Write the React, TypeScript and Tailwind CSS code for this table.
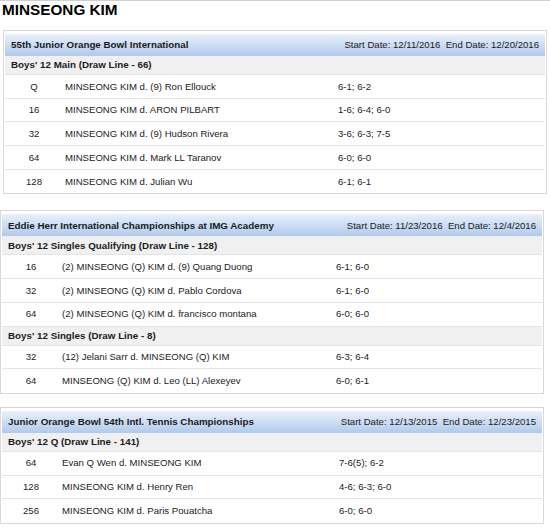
type Match = { round: string; result: string; score: string };
type Draw = { name: string; matches: Match[] };
type Tournament = {
  name: string;
  start: string;
  end: string;
  draws: Draw[];
  shell: string;
  cols: string;
};

const tournaments: Tournament[] = [
  {
    name: "55th Junior Orange Bowl International",
    start: "12/11/2016",
    end: "12/20/2016",
    shell: "ml-[3px] mt-[12px]",
    cols: "grid-cols-[58px_275px_1fr]",
    draws: [
      {
        name: "Boys' 12 Main (Draw Line - 66)",
        matches: [
          { round: "Q", result: "MINSEONG KIM d. (9) Ron Ellouck", score: "6-1; 6-2" },
          { round: "16", result: "MINSEONG KIM d. ARON PILBART", score: "1-6; 6-4; 6-0" },
          { round: "32", result: "MINSEONG KIM d. (9) Hudson Rivera", score: "3-6; 6-3; 7-5" },
          { round: "64", result: "MINSEONG KIM d. Mark LL Taranov", score: "6-0; 6-0" },
          { round: "128", result: "MINSEONG KIM d. Julian Wu", score: "6-1; 6-1" },
        ],
      },
    ],
  },
  {
    name: "Eddie Herr International Championships at IMG Academy",
    start: "11/23/2016",
    end: "12/4/2016",
    shell: "ml-0 mt-[16px]",
    cols: "grid-cols-[58px_276px_1fr]",
    draws: [
      {
        name: "Boys' 12 Singles Qualifying (Draw Line - 128)",
        matches: [
          { round: "16", result: "(2) MINSEONG (Q) KIM d. (9) Quang Duong", score: "6-1; 6-0" },
          { round: "32", result: "(2) MINSEONG (Q) KIM d. Pablo Cordova", score: "6-1; 6-0" },
          { round: "64", result: "(2) MINSEONG (Q) KIM d. francisco montana", score: "6-0; 6-0" },
        ],
      },
      {
        name: "Boys' 12 Singles (Draw Line - 8)",
        matches: [
          { round: "32", result: "(12) Jelani Sarr d. MINSEONG (Q) KIM", score: "6-3; 6-4" },
          { round: "64", result: "MINSEONG (Q) KIM d. Leo (LL) Alexeyev", score: "6-0; 6-1" },
        ],
      },
    ],
  },
  {
    name: "Junior Orange Bowl 54th Intl. Tennis Championships",
    start: "12/13/2015",
    end: "12/23/2015",
    shell: "ml-0 mt-[13px]",
    cols: "grid-cols-[58px_279px_1fr]",
    draws: [
      {
        name: "Boys' 12 Q (Draw Line - 141)",
        matches: [
          { round: "64", result: "Evan Q Wen d. MINSEONG KIM", score: "7-6(5); 6-2" },
          { round: "128", result: "MINSEONG KIM d. Henry Ren", score: "4-6; 6-3; 6-0" },
          { round: "256", result: "MINSEONG KIM d. Paris Pouatcha", score: "6-0; 6-0" },
        ],
      },
    ],
  },
];

function TournamentPanel({ t }: { t: Tournament }) {
  return (
    <section className={`${t.shell} w-[544px] border border-[#d9d9d9] px-px pt-[3px]`}>
      <div className="flex h-[22px] items-center justify-between bg-linear-to-b from-[#e9f1fb] to-[#b0caeb] px-[6px] text-[#1b1b1b]">
        <span className="text-[9.8px] font-bold">{t.name}</span>
        <span>
          Start Date: {t.start}&nbsp;&nbsp;End Date: {t.end}
        </span>
      </div>
      {t.draws.map((draw, di) => (
        <div key={draw.name}>
          <div className="flex h-[19px] items-center border-b border-[#e4e4e4] bg-[#f0f0f0] px-[6px] text-[9.8px] font-bold text-[#1b1b1b]">
            {draw.name}
          </div>
          {draw.matches.map((m, mi) => {
            const last = di === t.draws.length - 1 && mi === draw.matches.length - 1;
            return (
              <div
                key={m.round + m.result}
                className={`grid h-[23.7px] items-center ${t.cols} ${last ? "" : "border-b border-[#e4e4e4]"} text-[#222]`}
              >
                <span className="text-center">{m.round}</span>
                <span className="pl-[2px]">{m.result}</span>
                <span>{m.score}</span>
              </div>
            );
          })}
        </div>
      ))}
    </section>
  );
}

export default function App() {
  return (
    <div className="min-h-[531px] w-[550px] border-t border-[#cfcfcf] bg-white font-['Liberation_Sans',Arial,sans-serif] text-[9.6px] leading-none">
      <h1 className="pl-[2px] text-[15.3px] leading-[17px] font-bold text-black">MINSEONG KIM</h1>
      {tournaments.map((t) => (
        <TournamentPanel key={t.name} t={t} />
      ))}
    </div>
  );
}
